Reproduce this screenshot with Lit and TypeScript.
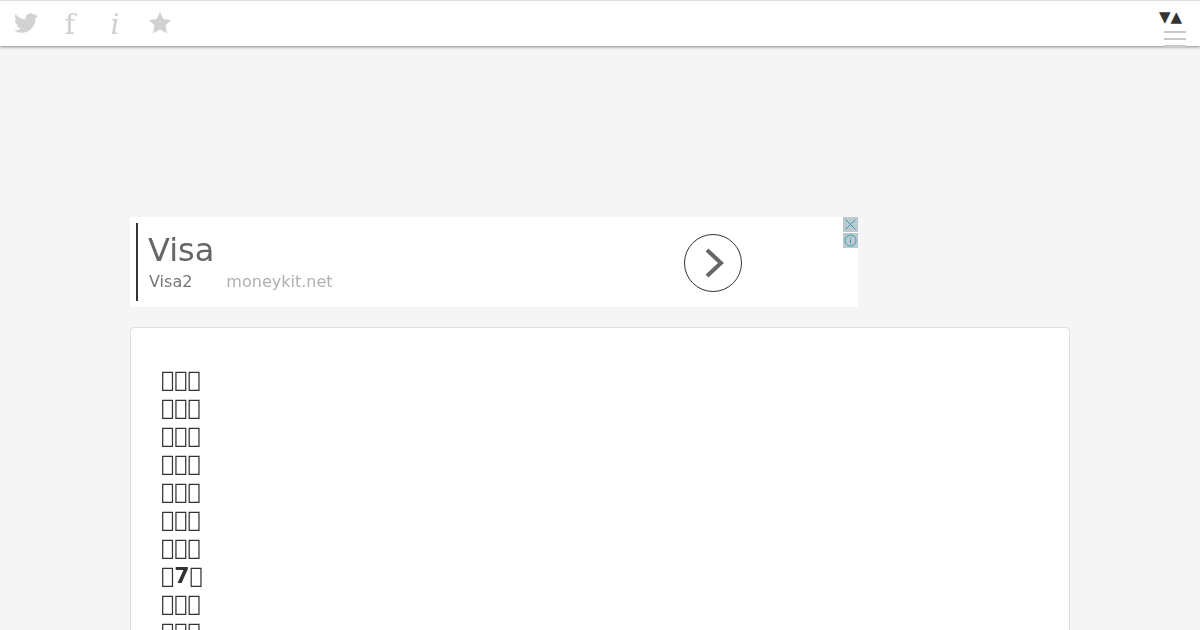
import { LitElement, html, css } from 'lit';
import { customElement } from 'lit/decorators.js';

const BOX = '\uE000\uE000\uE000';
const LINES = [BOX, BOX, BOX, BOX, BOX, BOX, BOX, '\uE0007\uE000', BOX, BOX];

@customElement('app-root')
export class AppRoot extends LitElement {
	static styles = css`
		:host {
			display: block;
			height: 630px;
			overflow: hidden;
			background: #f5f5f5;
			font-family: 'DejaVu Sans', sans-serif;
		}

		.nav {
			display: flex;
			justify-content: space-between;
			height: 45px;
			background: #fff;
			border-top: 1px solid #ddd;
			box-shadow: 0 1px 3px rgba(0, 0, 0, 0.45);
			position: relative;
		}

		.social {
			display: flex;
			align-items: center;
			padding: 0 0 2px 14px;
			color: #cfcfcf;
			will-change: transform;
		}

		.social svg {
			display: block;
			fill: #d2d2d2;
		}

		.letter {
			font-family: 'DejaVu Serif', serif;
			font-size: 28px;
			line-height: 30px;
			text-align: center;
			padding-top: 4px;
		}

		.f {
			width: 12px;
			margin-left: 26px;
		}

		.i {
			width: 14px;
			margin-left: 32px;
			font-style: italic;
		}

		.star {
			margin-left: 26px;
		}

		.controls {
			display: flex;
			flex-direction: column;
			align-items: flex-end;
			padding: 8px 14px 0 0;
		}

		.arrows {
			font-size: 15px;
			line-height: 17px;
			color: #333;
			margin-right: 4px;
		}

		.burger {
			display: flex;
			flex-direction: column;
			gap: 5px;
			margin-top: 5px;
		}

		.burger span {
			display: block;
			width: 22px;
			height: 2px;
			background: #c8c8c8;
		}

		.main {
			width: 940px;
			margin: 171px auto 0;
			will-change: transform;
		}

		.ad {
			display: flex;
			align-items: stretch;
			position: relative;
			width: 728px;
			height: 90px;
			background: #fff;
			padding: 6px;
			box-sizing: border-box;
		}

		.copy {
			flex: 0 0 535px;
			border-left: 2px solid #333;
			padding: 8px 0 0 10px;
		}

		.headline {
			font-size: 32px;
			line-height: 38px;
			color: #666;
		}

		.sub {
			display: flex;
			gap: 34px;
			font-size: 16px;
			line-height: 20px;
			margin: 3px 0 0 1px;
			color: #777;
		}

		.site {
			color: #b0b0b0;
		}

		.go {
			display: block;
			align-self: center;
			margin-top: 2px;
		}

		.adchoices {
			position: absolute;
			top: 0;
			right: 0;
			display: flex;
			flex-direction: column;
			gap: 1px;
		}

		.adchoices svg {
			display: block;
			background: #bccacf;
		}

		.card {
			margin-top: 20px;
			background: #fff;
			border: 1px solid #ddd;
			border-radius: 4px;
			padding: 38px 30px;
			font-size: 22px;
			font-weight: bold;
			line-height: 28px;
			color: #333;
		}
	`;

	render() {
		return html`
			<div class="nav">
				<div class="social">
					<svg width="24" height="24" viewBox="0 0 24 24">
						<path
							d="M23.953 4.57a10 10 0 01-2.825.775 4.958 4.958 0 002.163-2.723c-.951.555-2.005.959-3.127 1.184a4.92 4.92 0 00-8.384 4.482C7.69 8.095 4.067 6.13 1.64 3.162a4.822 4.822 0 00-.666 2.475c0 1.71.87 3.213 2.188 4.096a4.904 4.904 0 01-2.228-.616v.06a4.923 4.923 0 003.946 4.827 4.996 4.996 0 01-2.212.085 4.936 4.936 0 004.604 3.417 9.867 9.867 0 01-6.102 2.105c-.39 0-.779-.023-1.17-.067a13.995 13.995 0 007.557 2.209c9.053 0 13.998-7.496 13.998-13.985 0-.21 0-.42-.015-.63A9.935 9.935 0 0024 4.59z"
						/>
					</svg>
					<span class="letter f">f</span>
					<span class="letter i">i</span>
					<svg class="star" width="24" height="24" viewBox="0 0 24 24">
						<path d="M12 1l3.4 7 7.8 1-5.7 5.3 1.5 7.9L12 18.6l-7 3.6 1.5-7.9L.8 9l7.8-1z" />
					</svg>
				</div>
				<div class="controls">
					<div class="arrows">▼▲</div>
					<div class="burger"><span></span><span></span><span></span></div>
				</div>
			</div>
			<div class="main">
				<div class="ad">
					<div class="copy">
						<div class="headline">Visa</div>
						<div class="sub"><span>Visa2</span><span class="site">moneykit.net</span></div>
					</div>
					<svg class="go" width="60" height="60" viewBox="0 0 60 60">
						<circle cx="30" cy="30" r="28.5" fill="none" stroke="#333" stroke-width="1" />
						<path d="M24 17l14 13-14 13" fill="none" stroke="#666" stroke-width="4" />
					</svg>
					<div class="adchoices">
						<svg width="15" height="15" viewBox="0 0 15 15">
							<path d="M2.5 2.5l10 10M12.5 2.5l-10 10" fill="none" stroke="#2f9fb5" stroke-width="1" />
						</svg>
						<svg width="15" height="15" viewBox="0 0 15 15">
							<circle cx="7.5" cy="7.5" r="5.5" fill="none" stroke="#2f9fb5" stroke-width="1" />
							<path d="M7.5 4.5v1M7.5 6.5v4" fill="none" stroke="#2f9fb5" stroke-width="1" />
						</svg>
					</div>
				</div>
				<div class="card">
					${LINES.map((line) => html`<div>${line}</div>`)}
				</div>
			</div>
		`;
	}
}
